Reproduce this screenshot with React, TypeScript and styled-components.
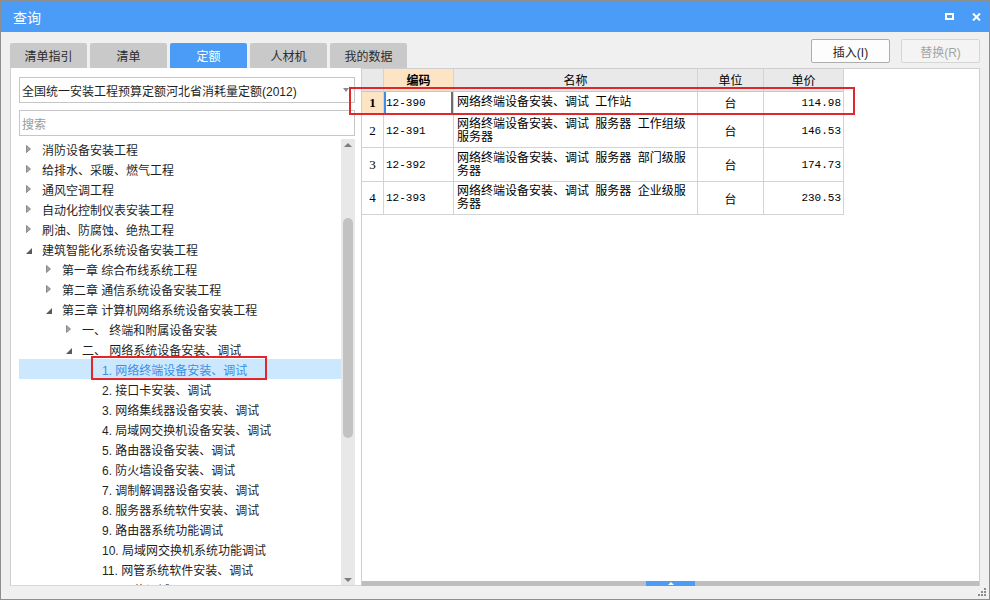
import React from "react";
import styled, { createGlobalStyle } from "styled-components";

const blue = "#4a9cf6";
const red = "#e3262c";
const sans = `"Liberation Sans", "Noto Sans CJK SC", sans-serif`;

const GlobalStyle = createGlobalStyle`
  * { box-sizing: border-box; }
  body {
    margin: 0;
    font-family: ${sans};
    font-size: 12px;
    color: #1f1f1f;
  }
`;

const Window = styled.div`
  position: relative;
  display: flex;
  flex-direction: column;
  width: 990px;
  height: 600px;
  border: 1px solid #8e8e8e;
  background: #f0f0f0;
`;

const TitleBar = styled.div`
  flex: none;
  display: flex;
  align-items: center;
  justify-content: space-between;
  height: 31px;
  padding: 0 8px 0 12px;
  background: ${blue};
  color: #fff;
  font-size: 14px;
`;

const WinButtons = styled.div`
  display: flex;
  align-items: center;
  gap: 18px;
`;

const Body = styled.div`
  flex: 1;
  display: flex;
  flex-direction: column;
  min-height: 0;
  padding: 0 9px 13px 9px;
`;

const Toolbar = styled.div`
  flex: none;
  display: flex;
  justify-content: space-between;
  height: 36px;
`;

const Tabs = styled.div`
  align-self: flex-end;
  display: flex;
  gap: 3px;
`;

const Tab = styled.div<{ $active?: boolean }>`
  display: flex;
  align-items: center;
  justify-content: center;
  width: 77px;
  height: 25px;
  border-radius: 2px 2px 0 0;
  background: ${(p) => (p.$active ? blue : "#c9c9c9")};
  color: ${(p) => (p.$active ? "#fff" : "#2b2b2b")};
`;

const Actions = styled.div`
  display: flex;
  gap: 11px;
  margin-top: 7px;
`;

const Button = styled.button<{ $disabled?: boolean }>`
  width: 79px;
  height: 24px;
  padding: 0;
  border: 1px solid ${(p) => (p.$disabled ? "#d6d6d6" : "#adadad")};
  border-radius: 2px;
  background: ${(p) => (p.$disabled ? "#f4f4f4" : "#fdfdfd")};
  color: ${(p) => (p.$disabled ? "#a4a4a4" : "#1f1f1f")};
  font-family: ${sans};
  font-size: 12px;
`;

const Content = styled.div`
  flex: 1;
  display: flex;
  min-height: 0;
`;

const LeftPanel = styled.div`
  flex: none;
  display: flex;
  flex-direction: column;
  width: 351px;
  padding: 9px 6px 0 8px;
  background: #fff;
  border-left: 1px solid #cfcfcf;
  border-bottom: 1px solid #d8d8d8;
`;

const Select = styled.div`
  flex: none;
  display: flex;
  align-items: center;
  justify-content: space-between;
  height: 26px;
  padding: 0 5px 0 2px;
  border: 1px solid #c6c6c6;
  white-space: nowrap;
`;

const SearchBox = styled.div`
  flex: none;
  display: flex;
  align-items: center;
  height: 26px;
  margin-top: 7px;
  padding: 0 2px;
  border: 1px solid #c6c6c6;
  color: #9b9b9b;
`;

const TreeArea = styled.div`
  flex: 1;
  display: flex;
  min-height: 0;
  margin-top: 3px;
`;

const TreeList = styled.div`
  flex: 1;
  overflow: hidden;
`;

const TreeRow = styled.div<{ $level: number; $selected?: boolean }>`
  position: relative;
  display: flex;
  align-items: center;
  height: 20px;
  padding-left: ${(p) => p.$level * 20}px;
  background: ${(p) => (p.$selected ? "#cce8ff" : "transparent")};
  color: ${(p) => (p.$selected ? "#3a8ee6" : "#1f1f1f")};
  white-space: nowrap;
`;

const Toggle = styled.span`
  flex: none;
  display: flex;
  align-items: center;
  width: 23px;
  height: 20px;
  padding-left: 7px;
`;

const TreeMark = styled.span`
  position: absolute;
  left: 72px;
  top: -3px;
  width: 176px;
  height: 24px;
  border: 2px solid ${red};
  pointer-events: none;
`;

const ScrollBar = styled.div`
  flex: none;
  display: flex;
  flex-direction: column;
  width: 14px;
  background: #e8e8e8;
`;

const ScrollArrow = styled.div<{ $down?: boolean }>`
  flex: none;
  display: flex;
  justify-content: center;
  align-items: ${(p) => (p.$down ? "flex-end" : "flex-start")};
  height: 14px;
  padding: ${(p) => (p.$down ? "0 0 3px" : "4px 0 0")};
`;

const Track = styled.div`
  flex: 1;
  padding: 65px 2px 0;
`;

const Thumb = styled.div`
  height: 220px;
  border-radius: 5px;
  background: #c2c2c2;
`;

const RightPanel = styled.div`
  flex: 1;
  display: flex;
  flex-direction: column;
  min-width: 0;
  background: #fff;
  border: 1px solid #cfcfcf;
  border-bottom: none;
`;

const TableArea = styled.div`
  flex: 1;
  position: relative;
`;

const Grid = styled.div`
  display: grid;
  grid-template-columns: 22px 70px 244px 66px 80px;
  grid-template-rows: 23px 22px 34px 34px 33px;
  width: max-content;
`;

const Cell = styled.div`
  display: flex;
  align-items: center;
  padding: 0 2px;
  border-right: 1px solid #d3d3d3;
  border-bottom: 1px solid #d3d3d3;
  background: #fff;
  color: #000;
  overflow: hidden;
`;

const HeadCell = styled(Cell)<{ $active?: boolean }>`
  justify-content: center;
  padding-bottom: 2px;
  border-bottom-color: #c6c6c6;
  background: ${(p) => (p.$active ? "#fde4c4" : "#e9e9e9")};
  font-weight: ${(p) => (p.$active ? 700 : 400)};
`;

const IndexCell = styled(Cell)<{ $current?: boolean }>`
  justify-content: center;
  padding: 0;
  background: ${(p) => (p.$current ? "#fde4c4" : "#fff")};
  font-family: "Liberation Serif", serif;
  font-size: 13px;
  font-weight: ${(p) => (p.$current ? 700 : 400)};
`;

const CodeCell = styled(Cell)<{ $focus?: boolean }>`
  font-family: "Liberation Mono", monospace;
  font-size: 11px;
  box-shadow: ${(p) =>
    p.$focus ? "inset 2px 0 0 #3b8eea, inset -2px 0 0 #6e6e6e" : "none"};
`;

const NameCell = styled(Cell)`
  padding: 0 8px 0 3px;
  line-height: 13px;
  word-spacing: 3px;
`;

const UnitCell = styled(Cell)`
  justify-content: center;
`;

const PriceCell = styled(Cell)`
  justify-content: flex-end;
  font-family: "Liberation Mono", monospace;
  font-size: 11px;
`;

const RowMark = styled.div`
  position: absolute;
  top: 18px;
  left: -13px;
  width: 506px;
  height: 28px;
  border: 2px solid ${red};
  pointer-events: none;
`;

const Splitter = styled.div`
  flex: none;
  display: flex;
  justify-content: center;
  height: 5px;
  background: #bebebe;
`;

const SplitHandle = styled.div`
  display: flex;
  align-items: center;
  justify-content: center;
  width: 49px;
  background: ${blue};
`;

const Grip = styled.div`
  position: absolute;
  right: 2px;
  bottom: 2px;
  display: flex;
`;

type Node = {
  level: number;
  text: string;
  state?: "open" | "closed";
  selected?: boolean;
};

const tree: Node[] = [
  { level: 0, state: "closed", text: "消防设备安装工程" },
  { level: 0, state: "closed", text: "给排水、采暖、燃气工程" },
  { level: 0, state: "closed", text: "通风空调工程" },
  { level: 0, state: "closed", text: "自动化控制仪表安装工程" },
  { level: 0, state: "closed", text: "刷油、防腐蚀、绝热工程" },
  { level: 0, state: "open", text: "建筑智能化系统设备安装工程" },
  { level: 1, state: "closed", text: "第一章 综合布线系统工程" },
  { level: 1, state: "closed", text: "第二章 通信系统设备安装工程" },
  { level: 1, state: "open", text: "第三章 计算机网络系统设备安装工程" },
  { level: 2, state: "closed", text: "一、 终端和附属设备安装" },
  { level: 2, state: "open", text: "二、 网络系统设备安装、调试" },
  { level: 3, text: "1. 网络终端设备安装、调试", selected: true },
  { level: 3, text: "2. 接口卡安装、调试" },
  { level: 3, text: "3. 网络集线器设备安装、调试" },
  { level: 3, text: "4. 局域网交换机设备安装、调试" },
  { level: 3, text: "5. 路由器设备安装、调试" },
  { level: 3, text: "6. 防火墙设备安装、调试" },
  { level: 3, text: "7. 调制解调器设备安装、调试" },
  { level: 3, text: "8. 服务器系统软件安装、调试" },
  { level: 3, text: "9. 路由器系统功能调试" },
  { level: 3, text: "10. 局域网交换机系统功能调试" },
  { level: 3, text: "11. 网管系统软件安装、调试" },
  { level: 3, text: "12. 网络调试" },
];

const rows = [
  { code: "12-390", name: "网络终端设备安装、调试 工作站", unit: "台", price: "114.98" },
  { code: "12-391", name: "网络终端设备安装、调试 服务器 工作组级服务器", unit: "台", price: "146.53" },
  { code: "12-392", name: "网络终端设备安装、调试 服务器 部门级服务器", unit: "台", price: "174.73" },
  { code: "12-393", name: "网络终端设备安装、调试 服务器 企业级服务器", unit: "台", price: "230.53" },
];

const tabs = ["清单指引", "清单", "定额", "人材机", "我的数据"];

const Arrow = ({ state }: { state?: "open" | "closed" }) => {
  if (state === "closed") {
    return (
      <svg width="5" height="8" viewBox="0 0 5 8">
        <path d="M0.5 0.5 L4.5 4 L0.5 7.5 Z" fill="#a3a3a3" stroke="#7a7a7a" strokeWidth="0.8" />
      </svg>
    );
  }
  if (state === "open") {
    return (
      <svg width="6" height="6" viewBox="0 0 6 6" style={{ marginTop: 3 }}>
        <path d="M6 0 L6 6 L0 6 Z" fill="#5a5a5a" />
      </svg>
    );
  }
  return null;
};

const App = () => {
  return (
    <Window>
      <GlobalStyle />
      <TitleBar>
        <span>查询</span>
        <WinButtons>
          <svg width="9" height="7" viewBox="0 0 9 7">
            <rect x="1" y="1" width="7" height="5" fill="none" stroke="#fff" strokeWidth="2" />
          </svg>
          <svg width="9" height="8" viewBox="0 0 9 8">
            <path d="M1 0.5 L8 7.5 M8 0.5 L1 7.5" stroke="#fff" strokeWidth="2" />
          </svg>
        </WinButtons>
      </TitleBar>

      <Body>
        <Toolbar>
          <Tabs>
            {tabs.map((t, i) => (
              <Tab key={t} $active={i === 2}>
                {t}
              </Tab>
            ))}
          </Tabs>
          <Actions>
            <Button>插入(I)</Button>
            <Button $disabled>替换(R)</Button>
          </Actions>
        </Toolbar>

        <Content>
          <LeftPanel>
            <Select>
              <span>全国统一安装工程预算定额河北省消耗量定额(2012)</span>
              <svg width="6" height="4" viewBox="0 0 6 4">
                <path d="M0 0 L6 0 L3 4 Z" fill="#8a8a8a" />
              </svg>
            </Select>
            <SearchBox>搜索</SearchBox>
            <TreeArea>
              <TreeList>
                {tree.map((n) => (
                  <TreeRow key={n.text} $level={n.level} $selected={n.selected}>
                    <Toggle>
                      <Arrow state={n.state} />
                    </Toggle>
                    <span>{n.text}</span>
                    {n.selected && <TreeMark />}
                  </TreeRow>
                ))}
              </TreeList>
              <ScrollBar>
                <ScrollArrow>
                  <svg width="8" height="4" viewBox="0 0 8 4">
                    <path d="M0 4 L4 0 L8 4 Z" fill="#7d7d7d" />
                  </svg>
                </ScrollArrow>
                <Track>
                  <Thumb />
                </Track>
                <ScrollArrow $down>
                  <svg width="8" height="4" viewBox="0 0 8 4">
                    <path d="M0 0 L8 0 L4 4 Z" fill="#7d7d7d" />
                  </svg>
                </ScrollArrow>
              </ScrollBar>
            </TreeArea>
          </LeftPanel>

          <RightPanel>
            <TableArea>
              <Grid>
                <HeadCell />
                <HeadCell $active>编码</HeadCell>
                <HeadCell>名称</HeadCell>
                <HeadCell>单位</HeadCell>
                <HeadCell>单价</HeadCell>
                {rows.map((r, i) => (
                  <React.Fragment key={r.code}>
                    <IndexCell $current={i === 0}>{i + 1}</IndexCell>
                    <CodeCell $focus={i === 0}>{r.code}</CodeCell>
                    <NameCell>{r.name}</NameCell>
                    <UnitCell>{r.unit}</UnitCell>
                    <PriceCell>{r.price}</PriceCell>
                  </React.Fragment>
                ))}
              </Grid>
              <RowMark />
            </TableArea>
            <Splitter>
              <SplitHandle>
                <svg width="6" height="3" viewBox="0 0 6 3">
                  <path d="M0 3 L3 0 L6 3 Z" fill="#fff" />
                </svg>
              </SplitHandle>
            </Splitter>
          </RightPanel>
        </Content>
      </Body>

      <Grip>
        <svg width="9" height="9" viewBox="0 0 9 9">
          <rect x="6" y="0" width="2" height="2" fill="#8c8c8c" />
          <rect x="3" y="3" width="2" height="2" fill="#8c8c8c" />
          <rect x="6" y="3" width="2" height="2" fill="#8c8c8c" />
          <rect x="0" y="6" width="2" height="2" fill="#8c8c8c" />
          <rect x="3" y="6" width="2" height="2" fill="#8c8c8c" />
          <rect x="6" y="6" width="2" height="2" fill="#8c8c8c" />
        </svg>
      </Grip>
    </Window>
  );
};

export default App;
